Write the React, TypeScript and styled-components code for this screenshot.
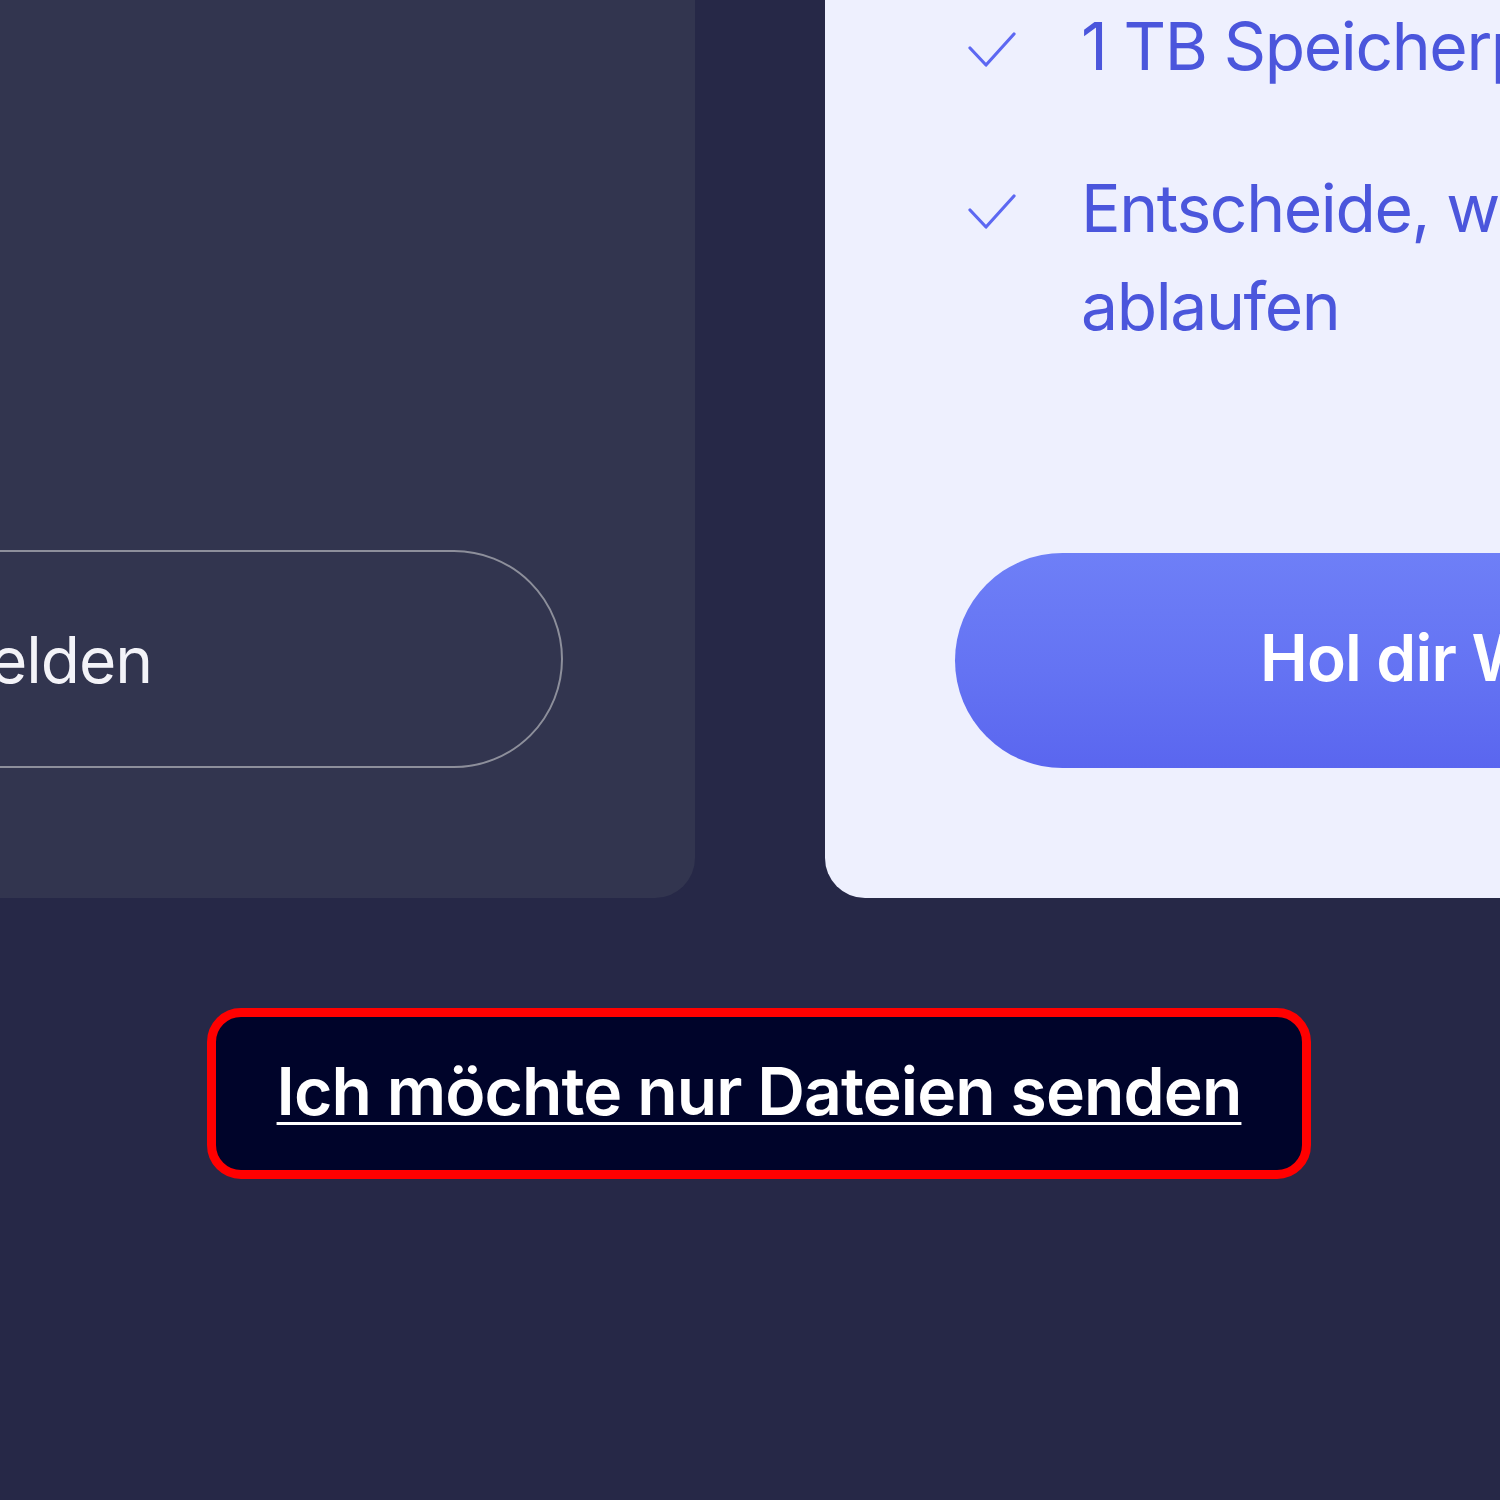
import React from "react";
import styled, { createGlobalStyle } from "styled-components";

const Global = createGlobalStyle`
  html, body { margin: 0; padding: 0; background: #262847; }
  body { font-family: Inter, "Noto Sans", sans-serif; }
`;

const Page = styled.div`
  width: 1500px;
  height: 1500px;
  overflow: hidden;
  background: #262847;
  display: flex;
  flex-direction: column;
`;

const CardsRow = styled.div`
  display: flex;
  gap: 130px;
  margin-left: -305px;
  flex-shrink: 0;
`;

const Card = styled.section<{ $light?: boolean }>`
  width: ${(p) => (p.$light ? "1400px" : "1000px")};
  height: 898px;
  box-sizing: border-box;
  flex-shrink: 0;
  display: flex;
  flex-direction: column;
  justify-content: space-between;
  padding-bottom: 130px;
  background: ${(p) => (p.$light ? "#eef0fe" : "#32354f")};
  border-radius: ${(p) => (p.$light ? "0 0 0 40px" : "0 0 40px 0")};
  padding-left: ${(p) => (p.$light ? "130px" : "0")};
  padding-right: ${(p) => (p.$light ? "0" : "132px")};
`;

const Features = styled.ul`
  list-style: none;
  margin: -3px 0 0 0;
  padding: 0 0 0 13px;
  display: flex;
  flex-direction: column;
  gap: 64px;
`;

const Feature = styled.li`
  display: grid;
  grid-template-columns: 48px 1fr;
  column-gap: 65px;
  align-items: start;
  font-size: 66px;
  line-height: 98px;
  color: #4b56dc;
  font-weight: 400;
  letter-spacing: -1.4px;
  white-space: nowrap;
`;

const Check = styled.svg`
  width: 48px;
  height: 38px;
  margin-top: 34px;
`;

const Spacer = styled.div`
  flex: 1;
`;

const OutlineButton = styled.button`
  align-self: flex-end;
  width: 900px;
  height: 218px;
  box-sizing: border-box;
  border: 2.5px solid #8d8f9b;
  border-radius: 109px;
  background: transparent;
  color: #f3f3f8;
  font-family: Inter, "Noto Sans", sans-serif;
  font-size: 64px;
  font-weight: 400;
  letter-spacing: -1px;
  white-space: nowrap;
  display: flex;
  align-items: center;
  justify-content: flex-end;
  padding: 0 409px 0 0;
`;

const PrimaryButton = styled.button`
  width: 1270px;
  height: 215px;
  box-sizing: border-box;
  border: none;
  border-radius: 108px 0 0 108px;
  background: linear-gradient(180deg, #6e7ff7 0%, #6473f3 55%, #5a66ef 100%);
  color: #ffffff;
  font-family: Inter, "Noto Sans", sans-serif;
  font-size: 64px;
  font-weight: 600;
  letter-spacing: -0.8px;
  display: flex;
  align-items: center;
  padding: 0 0 6px 305px;
  white-space: nowrap;
  flex-shrink: 0;
`;

const LinkRow = styled.div`
  display: flex;
  padding-left: 207px;
  margin-top: 110px;
`;

const SkipLink = styled.a`
  box-sizing: border-box;
  width: 1104px;
  height: 171px;
  border: 9px solid #ff0000;
  border-radius: 34px;
  background: #00042a;
  display: flex;
  align-items: center;
  justify-content: center;
  color: #ffffff;
  font-family: Inter, "Noto Sans", sans-serif;
  font-size: 66px;
  font-weight: 600;
  letter-spacing: -0.9px;
  text-decoration: underline;
  text-decoration-thickness: 3px;
  text-underline-offset: 7px;
  white-space: nowrap;
  padding-bottom: 6px;
`;

const CheckIcon = () => (
  <Check viewBox="0 0 48 38" fill="none">
    <path d="M2 17 L18 34 L46 3" stroke="#5d68f2" strokeWidth="3.2" strokeLinecap="round" strokeLinejoin="round" />
  </Check>
);

export default function App() {
  return (
    <>
      <Global />
      <Page>
        <CardsRow>
          <Card>
            <Spacer />
            <OutlineButton>Kostenlos anmelden</OutlineButton>
          </Card>
          <Card $light>
            <Features>
              <Feature>
                <CheckIcon />
                <span>1 TB Speicherplatz</span>
              </Feature>
              <Feature>
                <CheckIcon />
                <span>
                  Entscheide, wo und wann Transfers
                  <br />
                  ablaufen
                </span>
              </Feature>
            </Features>
            <PrimaryButton>Hol dir WeTransfer Pro</PrimaryButton>
          </Card>
        </CardsRow>
        <LinkRow>
          <SkipLink href="#">Ich möchte nur Dateien senden</SkipLink>
        </LinkRow>
      </Page>
    </>
  );
}
